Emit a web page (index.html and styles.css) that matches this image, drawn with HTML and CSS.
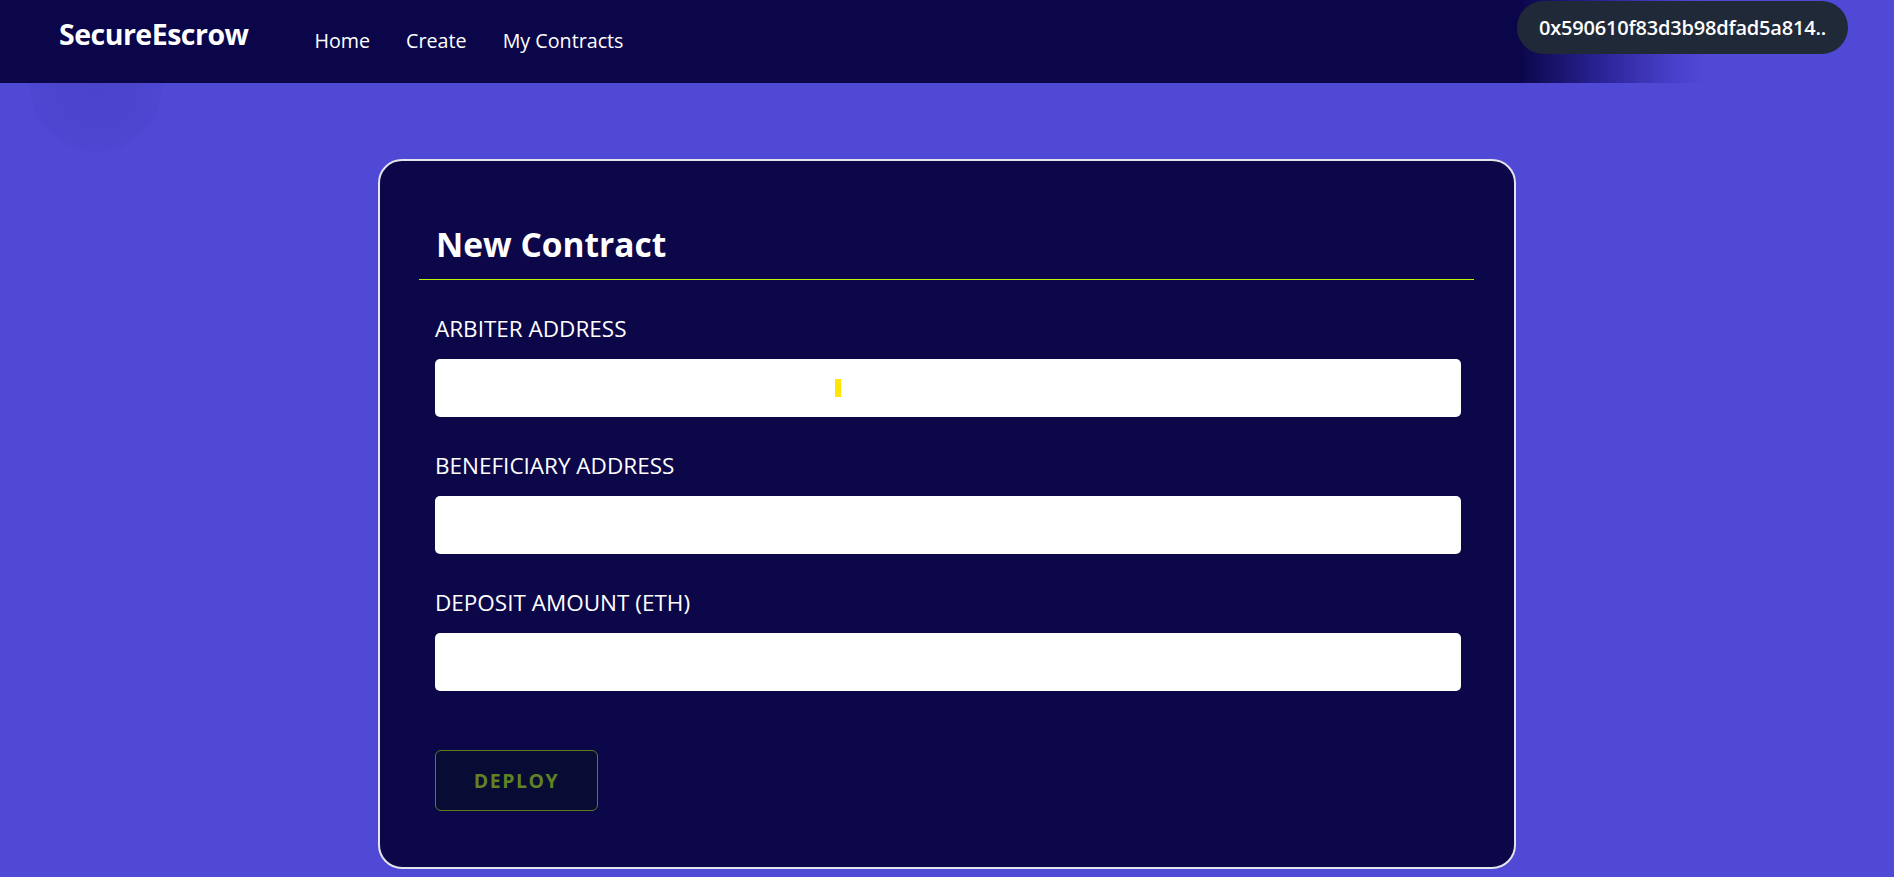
FILE: index.html
```html
<!DOCTYPE html>
<html lang="en">
<head>
<meta charset="utf-8">
<title>SecureEscrow</title>
<link rel="stylesheet" href="styles.css">
</head>
<body>
<div class="blob"></div>
<header class="topbar">
  <div class="logo">SecureEscrow</div>
  <nav class="nav">
    <a class="nav-link" href="#">Home</a>
    <a class="nav-link" href="#">Create</a>
    <a class="nav-link" href="#">My Contracts</a>
  </nav>
  <div class="wallet">0x590610f83d3b98dfad5a814..</div>
</header>
<main class="main">
  <section class="card">
    <div class="card-head">
      <h1 class="card-title">New Contract</h1>
    </div>
    <form class="form">
      <label class="field-label">ARBITER ADDRESS</label>
      <div class="input-wrap">
        <input class="field-input" type="text">
        <span class="caret"></span>
      </div>
      <label class="field-label">BENEFICIARY ADDRESS</label>
      <div class="input-wrap">
        <input class="field-input" type="text">
      </div>
      <label class="field-label">DEPOSIT AMOUNT (ETH)</label>
      <div class="input-wrap">
        <input class="field-input" type="text">
      </div>
      <button class="deploy" type="button">DEPLOY</button>
    </form>
  </section>
</main>
</body>
</html>
```
FILE: styles.css
```css
* { box-sizing: border-box; }
html, body { margin: 0; padding: 0; }
body {
  background: #5049d6;
  font-family: "Open Sans", "Noto Sans", sans-serif;
  color: #ffffff;
  min-height: 877px;
  position: relative;
  overflow: hidden;
}
.blob {
  position: absolute;
  left: 30px;
  top: 20px;
  width: 132px;
  height: 132px;
  border-radius: 50%;
  background: radial-gradient(circle, rgba(20,10,90,0.09) 0%, rgba(20,10,90,0.06) 55%, rgba(20,10,90,0.02) 85%, rgba(20,10,90,0) 100%);
  z-index: 0;
}
.topbar {
  position: relative;
  z-index: 1;
  height: 83px;
  display: flex;
  align-items: flex-start;
  padding: 0 46px 0 59px;
  background: linear-gradient(90deg, #0b0649 0%, #0b0649 80.2%, #2a2396 84.5%, #4941cd 88.5%, #5049d6 90%);
}
.logo {
  margin-top: 15px;
  font-size: 28.5px;
  line-height: 38px;
  font-weight: 700;
  letter-spacing: -0.5px;
}
.nav {
  display: flex;
  gap: 36px;
  margin-left: 66px;
  margin-top: 26px;
}
.nav-link {
  color: #ffffff;
  text-decoration: none;
  font-size: 19.7px;
  line-height: 30px;
}
.wallet {
  margin-left: auto;
  margin-top: 1px;
  height: 53px;
  padding: 0 22px;
  border-radius: 27px;
  background: #1f2937;
  font-size: 20px;
  font-weight: 600;
  line-height: 53px;
  letter-spacing: -0.2px;
}
.main {
  position: relative;
  z-index: 1;
  padding-top: 76px;
}
.card {
  width: 1138px;
  margin: 0 auto;
  background: #0c0749;
  border: 2px solid #e4e4ec;
  border-radius: 24px;
  padding: 0 40px 56px 39px;
}
.card-head {
  padding: 62px 17px 14px;
  border-bottom: 1px solid #b8f500;
}
.card-title {
  margin: 0;
  font-size: 33.5px;
  line-height: 42px;
  font-weight: 700;
}
.form {
  display: flex;
  flex-direction: column;
  align-items: flex-start;
  padding: 34px 13px 0 16px;
}
.field-label {
  font-size: 22.5px;
  line-height: 30px;
  margin-bottom: 15px;
}
.input-wrap {
  position: relative;
  width: 100%;
  margin-bottom: 34px;
}
.field-input {
  display: block;
  width: 100%;
  height: 58px;
  border: none;
  border-radius: 5px;
  background: #ffffff;
  padding: 0 16px;
  font-family: inherit;
  font-size: 18px;
  outline: none;
}
.caret {
  position: absolute;
  left: 400px;
  top: 20px;
  width: 6px;
  height: 18px;
  background: #ffe600;
}
.deploy {
  margin-top: 25px;
  width: 163px;
  height: 61px;
  background: #080b33;
  border: 1px solid #5b7d1c;
  border-radius: 6px;
  color: #5f8222;
  font-family: inherit;
  font-size: 19.5px;
  font-weight: 700;
  letter-spacing: 1.5px;
}
```
